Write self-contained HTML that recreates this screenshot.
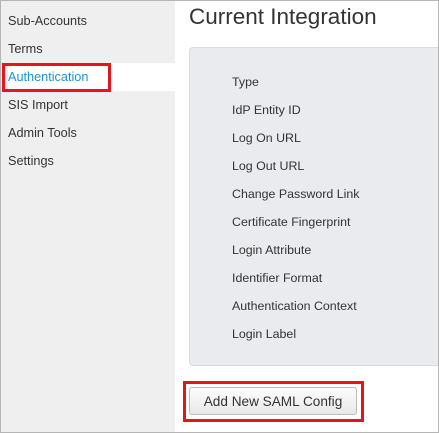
<!DOCTYPE html><html><head><style>
body{margin:0;width:439px;height:433px;overflow:hidden;font-family:"Liberation Sans",sans-serif;background:#fff}
.wrap{position:absolute;left:0;top:0;width:437px;height:431px;border:1px solid #b5b5b5;overflow:hidden;background:#fff}
.side{position:absolute;left:0;top:0;width:174px;height:431px;background:#efefef}
.side div{position:absolute;left:7px;font-size:12.7px;color:#333}
.hl{position:absolute;left:0;top:62px;width:174px;height:28px;background:#fff}
.red{position:absolute;border:3px solid #e8141c;box-sizing:border-box}
h1{position:absolute;left:188px;top:3px;margin:0;font-weight:normal;font-size:22.5px;color:#333}
.panel{position:absolute;left:188px;top:46px;width:260px;height:317px;background:#e9ebee;border:1px solid #d8dadd;border-radius:4px}
.lab{position:absolute;left:231px;font-size:12.4px;color:#333}
.btn{position:absolute;left:188px;top:386px;width:168px;height:28px;border:1px solid #bcbcbc;border-radius:3px;background:linear-gradient(#fdfdfd,#e8e8e8);font-size:13.6px;color:#333;text-align:center;line-height:28px;box-sizing:border-box}
</style></head><body><div class="wrap">
<div class="side"><div class="hl"></div>
<div style="top:13px">Sub-Accounts</div>
<div style="top:41px">Terms</div>
<div style="top:69px;color:#1d94d2;z-index:2">Authentication</div>
<div style="top:97px">SIS Import</div>
<div style="top:125px">Admin Tools</div>
<div style="top:153px">Settings</div>
</div>
<div class="red" style="left:1px;top:62px;width:109px;height:29px"></div>
<h1>Current Integration</h1>
<div class="panel"></div>
<div class="lab" style="top:74px">Type</div>
<div class="lab" style="top:102px">IdP Entity ID</div>
<div class="lab" style="top:130px">Log On URL</div>
<div class="lab" style="top:158px">Log Out URL</div>
<div class="lab" style="top:186px">Change Password Link</div>
<div class="lab" style="top:214px">Certificate Fingerprint</div>
<div class="lab" style="top:242px">Login Attribute</div>
<div class="lab" style="top:270px">Identifier Format</div>
<div class="lab" style="top:298px">Authentication Context</div>
<div class="lab" style="top:326px">Login Label</div>
<div class="red" style="left:182px;top:380px;width:181px;height:41px"></div>
<div class="btn">Add New SAML Config</div>
</div></body></html>
